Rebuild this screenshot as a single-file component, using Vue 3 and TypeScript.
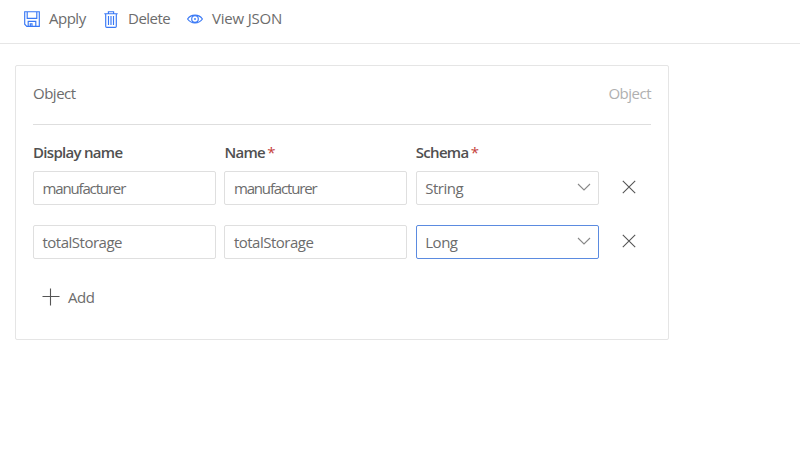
<script setup lang="ts">
import { ref } from 'vue'

interface Field {
  displayName: string
  name: string
  schema: string
  focused: boolean
}

const fields = ref<Field[]>([
  { displayName: 'manufacturer', name: 'manufacturer', schema: 'String', focused: false },
  { displayName: 'totalStorage', name: 'totalStorage', schema: 'Long', focused: true },
])

function addField(): void {
  fields.value.push({ displayName: '', name: '', schema: 'String', focused: false })
}

function removeField(index: number): void {
  fields.value.splice(index, 1)
}
</script>

<template>
  <main class="page">
    <nav class="toolbar">
      <button class="command apply">
        <svg width="16" height="16" viewBox="0 0 16 16">
          <path d="M.7 .7H15.3V15.3H2.8L.7 13.2ZM3.2 .7V7.3H12.8V.7M4.2 15.3V10.3H11.8V15.3M6.3 15V12.7H8V15" />
        </svg>
        <span>Apply</span>
      </button>
      <button class="command delete">
        <svg width="14" height="17" viewBox="0 0 14 17">
          <path d="M.3 2.7H13.7M4.4 2.7V.7H9.6V2.7M1.7 2.7V15.2Q1.7 16.3 2.8 16.3H11.2Q12.3 16.3 12.3 15.2V2.7M4.5 5V14M7 5V14M9.5 5V14" />
        </svg>
        <span>Delete</span>
      </button>
      <button class="command view">
        <svg width="16" height="10" viewBox="0 0 16 10">
          <path d="M.6 5C4-.2 12-.2 15.4 5C12 10.2 4 10.2 .6 5Z" />
          <circle cx="8" cy="5" r="3.3" />
          <circle class="pupil" cx="8" cy="5" r=".9" />
        </svg>
        <span>View JSON</span>
      </button>
    </nav>

    <section class="card">
      <header class="card-head">
        <span>Object</span>
        <span class="kind">Object</span>
      </header>
      <div class="grid labels">
        <span class="l-display">Display name</span>
        <span class="l-name">Name <i>*</i></span>
        <span class="l-schema">Schema <i>*</i></span>
      </div>
      <div v-for="(field, index) in fields" :key="index" class="grid row">
        <div class="box"><span :class="field.displayName">{{ field.displayName }}</span></div>
        <div class="box"><span :class="field.name">{{ field.name }}</span></div>
        <div class="box select" :class="{ focused: field.focused }">
          <span>{{ field.schema }}</span>
          <svg width="14" height="8" viewBox="0 0 14 8"><path d="M1 1L7 7L13 1" /></svg>
        </div>
        <button class="remove" aria-label="Remove" @click="removeField(index)">
          <svg width="14" height="14" viewBox="0 0 14 14"><path d="M.8 .8L13.2 13.2M13.2 .8L.8 13.2" /></svg>
        </button>
      </div>
      <button class="add" @click="addField">
        <svg width="18" height="18" viewBox="0 0 18 18"><path d="M.5 8.5H17.5M8.5 .5V17.5" /></svg>
        <span>Add</span>
      </button>
    </section>
  </main>
</template>

<style>
body {
  background: #fff;
}
</style>

<style scoped>
.page {
  height: 466px;
  overflow: hidden;
  box-sizing: border-box;
  font: 400 15px/20px "Open Sans", "Noto Sans", sans-serif;
  letter-spacing: -0.5px;
  color: #6c6c6c;
}
button {
  display: flex;
  align-items: center;
  padding: 0;
  border: 0;
  background: none;
  font: inherit;
  letter-spacing: inherit;
  color: inherit;
}
span {
  white-space: nowrap;
}
svg {
  flex: none;
  fill: none;
  stroke: #555;
  stroke-width: 1.1;
}
.toolbar {
  display: flex;
  box-sizing: border-box;
  height: 44px;
  padding: 0 0 5px 24px;
  border-bottom: 1px solid #e6e6e6;
}
.command span {
  margin-top: -3px;
}
.command svg {
  stroke: #3878f5;
  stroke-width: 1.15;
}
.command .pupil {
  fill: #3878f5;
  stroke: none;
}
.apply {
  width: 80px;
  gap: 9px;
}
.delete {
  width: 83px;
  gap: 10px;
}
.view {
  gap: 9px;
  letter-spacing: -0.2px;
}
.card {
  box-sizing: border-box;
  width: 654px;
  height: 275px;
  margin: 21px 0 0 15px;
  padding: 0 17px;
  border: 1px solid #e5e5e5;
  border-radius: 2px;
}
.card-head {
  display: flex;
  justify-content: space-between;
  box-sizing: border-box;
  height: 59px;
  padding-top: 17px;
  border-bottom: 1px solid #dedede;
}
.kind {
  color: #b0b0b0;
}
.grid {
  display: grid;
  grid-template-columns: 183px 183px 183px 16px;
  column-gap: 8.4px;
}
.labels {
  height: 29px;
  padding-top: 17px;
  font-weight: 600;
  letter-spacing: -0.7px;
  color: #505050;
}
.labels i {
  font-style: normal;
  font-weight: 400;
  margin-left: -1px;
  color: #c5403c;
}
.row {
  height: 34px;
  margin-bottom: 20.4px;
}
.box {
  display: flex;
  align-items: center;
  box-sizing: border-box;
  height: 34px;
  padding: 0 8.5px;
  border: 1px solid #dfdfdf;
  border-radius: 2px;
}
.manufacturer {
  letter-spacing: -1.15px;
}
.select {
  justify-content: space-between;
  padding-right: 7px;
}
.select svg {
  margin-bottom: 2px;
  stroke: #888;
}
.focused {
  border-color: #5b8be0;
}
.remove {
  width: 14px;
  height: 32px;
  margin-left: 15px;
}
.add {
  height: 20px;
  margin: 28px 0 0 9px;
  gap: 8px;
}
.add span {
  margin-top: -1px;
}
</style>
